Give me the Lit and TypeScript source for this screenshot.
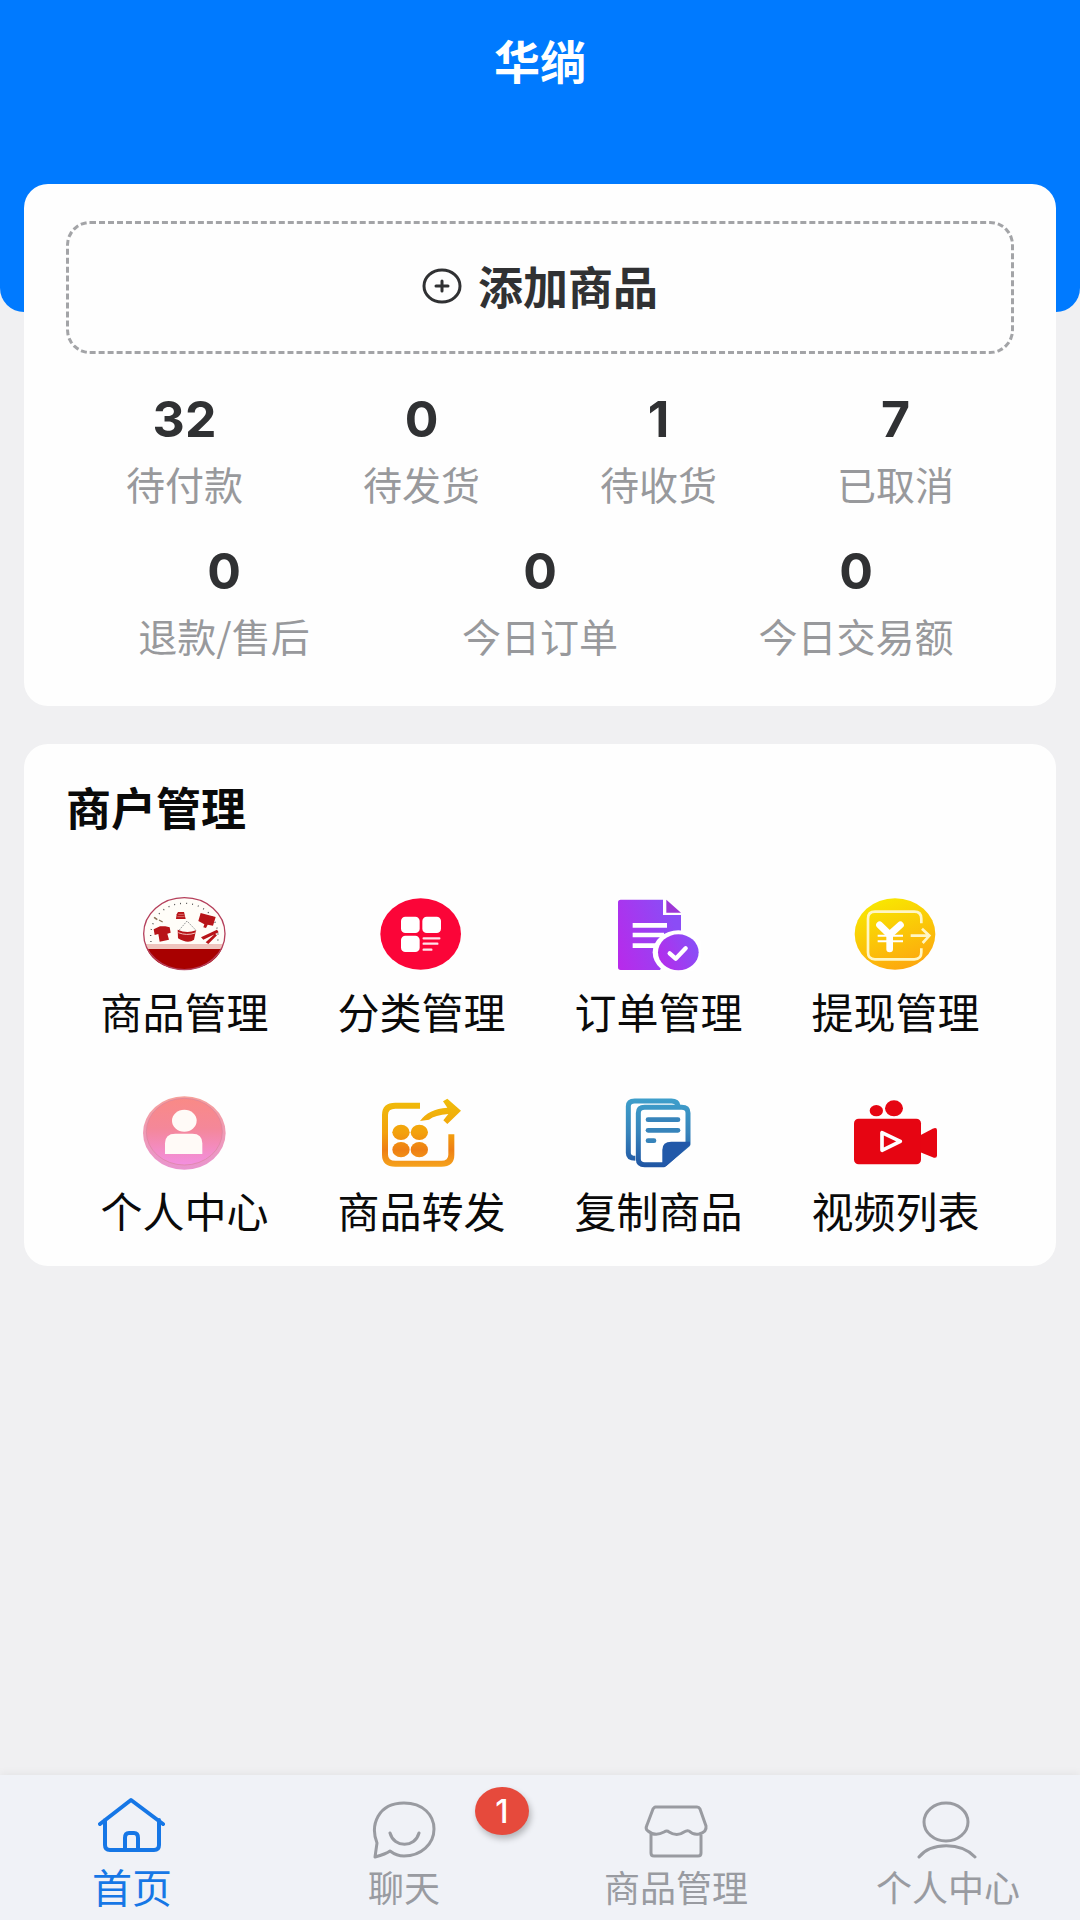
import { LitElement, html, css, svg, TemplateResult } from "lit";
import { customElement, property } from "lit/decorators.js";
import { classMap } from "lit/directives/class-map.js";

interface Stat {
  value: number;
  label: string;
}

interface Tile {
  label: string;
  icon: TemplateResult;
}

interface Tab {
  label: string;
  icon: TemplateResult;
  active?: boolean;
  badge?: number;
}

const orderStats: Stat[] = [
  { value: 32, label: "待付款" },
  { value: 0, label: "待发货" },
  { value: 1, label: "待收货" },
  { value: 7, label: "已取消" },
];

const dayStats: Stat[] = [
  { value: 0, label: "退款/售后" },
  { value: 0, label: "今日订单" },
  { value: 0, label: "今日交易额" },
];

const goodsIcon = html`<svg viewBox="69 51 252 222" aria-hidden="true">
  <ellipse cx="193" cy="161" rx="122" ry="108" fill="#fffdf8" />
  <path d="M78 192H308L303 208H83Z" fill="#efc4bd" />
  <path d="M81 207H305C291 243 247 269 193 269S95 243 81 207Z" fill="#a80000" />
  <ellipse cx="193" cy="161" rx="122" ry="108" fill="none" stroke="#b5405c" stroke-width="4" />
  <path d="M93 186C84 120 130 70 193 70S302 120 293 186" fill="none" stroke="#555" stroke-width="4" stroke-dasharray="3 15" />
  <path d="M101 148L120 139H136L149 142L152 158L142 161L147 179L119 185L115 162L104 165Z" fill="#b81418" />
  <path d="M168 117L170 103L174 96H192L197 117Z" fill="#b81418" />
  <path d="M175 103H191M172 110H194" stroke="#e79a94" stroke-width="2" />
  <path d="M242 99L287 111L279 137L263 134L258 144L250 142L253 133L235 123Z" fill="#b81418" />
  <path d="M177 151L201 123L228 151" fill="none" stroke="#999" stroke-width="3" stroke-dasharray="5 3" />
  <path d="M173 149Q200 162 228 151L222 179Q204 193 174 175Z" fill="#b81418" />
  <path d="M175 158Q200 168 226 159" fill="none" stroke="#f3c2bd" stroke-width="3" />
  <path d="M243 172L291 149L296 157L250 179ZM257 187L285 161L291 166L265 192Z" fill="#b81418" />
  <path d="M102 112L112 119M117 120L128 126" stroke="#8b7355" stroke-width="4" />
</svg>`;

const categoryIcon = html`<svg viewBox="60 51 252 222" aria-hidden="true">
  <ellipse cx="182" cy="162" rx="121" ry="107" fill="#fb0538" />
  <g fill="#fff">
    <rect x="123" y="110" width="56" height="49" rx="13" />
    <rect x="187" y="110" width="56" height="49" rx="13" />
    <rect x="123" y="167" width="56" height="49" rx="13" />
  </g>
  <path d="M191 175H238M191 191H232M191 209H214" stroke="#ffe3ea" stroke-width="7" stroke-linecap="round" />
</svg>`;

const orderIcon = html`<svg viewBox="81 51 252 222" aria-hidden="true">
  <defs>
    <linearGradient id="order" x1="0" y1="1" x2="1" y2="0.6">
      <stop offset="0" stop-color="#b929ea" />
      <stop offset="1" stop-color="#8b4cf6" />
    </linearGradient>
  </defs>
  <path d="M92 59H219V105H273V160L210 270H92Q84 270 84 262V67Q84 59 92 59Z" fill="url(#order)" />
  <path d="M229 59L273 98H229Z" fill="#9d36d6" />
  <path d="M128 136H231M128 165H222M128 197H200" stroke="#fff" stroke-width="14" />
  <ellipse cx="265" cy="217" rx="77" ry="66" fill="#fff" />
  <ellipse cx="265" cy="217" rx="61" ry="54" fill="url(#order)" />
  <path d="M239 220L257 236L287 205" fill="none" stroke="#fff" stroke-width="13" stroke-linecap="round" stroke-linejoin="round" />
</svg>`;

const withdrawIcon = html`<svg viewBox="102 51 252 222" aria-hidden="true">
  <defs>
    <linearGradient id="coin" x1="0.2" y1="0" x2="0.6" y2="1">
      <stop offset="0" stop-color="#f8ea00" />
      <stop offset="1" stop-color="#fda80e" />
    </linearGradient>
  </defs>
  <ellipse cx="225" cy="162" rx="121" ry="107" fill="url(#coin)" />
  <path d="M304 130V116Q304 95 283 95H165Q144 95 144 116V217Q144 238 165 238H283Q304 238 304 217V205" fill="none" stroke="#fff6c4" stroke-width="8" />
  <path d="M272 167H324M306 146L328 167L308 189" fill="none" stroke="#fff6c4" stroke-width="8" />
  <path d="M179 135L209 164L241 135" fill="none" stroke="#fff" stroke-width="21" stroke-linecap="round" />
  <path d="M209 160V207" stroke="#fff" stroke-width="20" stroke-linecap="round" />
  <path d="M173 167H249M173 184H249" stroke="#fff" stroke-width="6" />
</svg>`;

const profileIcon = html`<svg viewBox="69 51 252 222" aria-hidden="true">
  <defs>
    <linearGradient id="profile" x1="0" y1="0" x2="0" y2="1">
      <stop offset="0" stop-color="#f98a86" />
      <stop offset="0.45" stop-color="#f48799" />
      <stop offset="1" stop-color="#f38fe0" />
    </linearGradient>
    <linearGradient id="profile-rim" x1="0" y1="0" x2="0" y2="1">
      <stop offset="0" stop-color="#f6a09a" />
      <stop offset="1" stop-color="#e994cf" />
    </linearGradient>
  </defs>
  <ellipse cx="193" cy="162" rx="124" ry="110" fill="url(#profile-rim)" />
  <ellipse cx="193" cy="158" rx="114" ry="100" fill="url(#profile)" stroke="#d9849d" stroke-width="2" />
  <ellipse cx="193" cy="125" rx="37" ry="33" fill="#fffaf7" />
  <path d="M135 225V193Q135 164 166 164H217Q247 164 247 193V225Z" fill="#fffaf7" />
</svg>`;

const forwardIcon = html`<svg viewBox="60 51 252 222" aria-hidden="true">
  <defs>
    <linearGradient id="forward" gradientUnits="userSpaceOnUse" x1="0" y1="60" x2="0" y2="262">
      <stop offset="0" stop-color="#efbd0a" />
      <stop offset="0.5" stop-color="#f3a10c" />
      <stop offset="0.75" stop-color="#ee7f14" />
      <stop offset="1" stop-color="#f5a21c" />
    </linearGradient>
  </defs>
  <path d="M180 80H106Q75 80 75 108V227Q75 254 106 254H244Q274 254 274 227V166" fill="none" stroke="url(#forward)" stroke-width="18" />
  <g fill="url(#forward)">
    <ellipse cx="123" cy="160" rx="26" ry="23" />
    <ellipse cx="178" cy="160" rx="26" ry="23" />
    <ellipse cx="123" cy="212" rx="26" ry="23" />
    <ellipse cx="178" cy="212" rx="26" ry="23" />
    <path d="M180 126Q205 90 262 86L249 67L262 59L303 95L262 135L250 124L265 105Q225 108 207 122Z" />
  </g>
</svg>`;

const copyIcon = html`<svg viewBox="81 51 252 222" aria-hidden="true">
  <defs>
    <linearGradient id="copy" gradientUnits="userSpaceOnUse" x1="0" y1="58" x2="0" y2="264">
      <stop offset="0" stop-color="#3e9fcb" />
      <stop offset="0.5" stop-color="#3784bb" />
      <stop offset="1" stop-color="#1f55a3" />
    </linearGradient>
  </defs>
  <path d="M264 80Q262 66 244 66H134Q115 66 115 82V222Q115 238 136 238" fill="none" stroke="url(#copy)" stroke-width="15" />
  <path d="M222 257H164Q145 257 145 240V102Q145 85 164 85H275Q294 85 294 102V196Z" fill="#fff" stroke="url(#copy)" stroke-width="15" stroke-linejoin="round" />
  <path d="M217 262V212Q217 188 244 188H300V197L228 262Z" fill="#2259a9" />
  <g fill="#3784bb">
    <rect x="167" y="115" width="104" height="14" rx="7" />
    <rect x="167" y="147" width="104" height="14" rx="7" />
    <rect x="167" y="178" width="32" height="14" rx="7" />
  </g>
</svg>`;

const videoIcon = html`<svg viewBox="99 51 252 222" aria-hidden="true">
  <g fill="#e60512">
    <ellipse cx="166" cy="95" rx="20" ry="17" />
    <ellipse cx="219" cy="88" rx="27" ry="24" />
    <rect x="99" y="119" width="201" height="137" rx="14" />
    <path d="M298 169L335 149Q348 143 348 154V229Q348 240 335 235L298 220Z" />
  </g>
  <path d="M183 161V214L238 187Z" fill="none" stroke="#fff" stroke-width="11" stroke-linejoin="round" />
</svg>`;

const tiles: Tile[] = [
  { label: "商品管理", icon: goodsIcon },
  { label: "分类管理", icon: categoryIcon },
  { label: "订单管理", icon: orderIcon },
  { label: "提现管理", icon: withdrawIcon },
  { label: "个人中心", icon: profileIcon },
  { label: "商品转发", icon: forwardIcon },
  { label: "复制商品", icon: copyIcon },
  { label: "视频列表", icon: videoIcon },
];

const tabs: Tab[] = [
  {
    label: "首页",
    active: true,
    icon: svg`<path d="M2 27L33 3L65 27M7 23V48Q7 53 12 53H56Q61 53 61 48V23M27 53V41Q27 36 31 36H36Q40 36 40 41V53" stroke-width="4" />`,
  },
  {
    label: "聊天",
    badge: 1,
    icon: svg`<path d="M5 60L7 46C0 28 8 6 34 6C53 6 64 18 64 32C64 47 51 59 34 59C28 59 24 57 20 54Q16 57 5 60ZM20 36C24 51 45 51 49 36" />`,
  },
  {
    label: "商品管理",
    icon: svg`<path d="M13 10H55Q57 10 58 12L64 29Q65 35 57 37Q51 38 47 34Q45 33 42 35Q35 40 27 35Q25 33 22 35Q13 40 6 34Q3 32 5 28L11 12Q12 10 14 10ZM9 37V56Q9 59 12 59H56Q59 59 59 56V37" />`,
  },
  {
    label: "个人中心",
    icon: svg`<ellipse cx="32" cy="25" rx="22" ry="19" /><path d="M5 60C17 45 47 45 61 60" />`,
  },
];

@customElement("stat-row")
export class StatRow extends LitElement {
  @property({ attribute: false }) stats: Stat[] = [];

  static styles = css`
    :host {
      display: block;
    }
    .row {
      display: grid;
      grid-auto-flow: column;
      grid-auto-columns: minmax(0, 1fr);
    }
    .stat {
      display: flex;
      flex-direction: column;
      align-items: center;
      gap: 4px;
      color: #98999c;
      text-decoration: none;
      white-space: nowrap;
    }
    .value {
      font-family: Inter, "Noto Sans CJK SC", sans-serif;
      font-size: 50px;
      font-weight: 700;
      line-height: 64px;
      color: #303133;
    }
    .label {
      font-size: 39px;
      line-height: 56px;
    }
  `;

  render() {
    return html`<div class="row">
      ${this.stats.map(
        (s) => html`<a class="stat" href="#">
          <span class="value">${s.value}</span>
          <span class="label">${s.label}</span>
        </a>`
      )}
    </div>`;
  }
}

@customElement("tab-bar")
export class TabBar extends LitElement {
  @property({ attribute: false }) tabs: Tab[] = [];

  static styles = css`
    :host {
      display: block;
      position: sticky;
      bottom: 0;
      overflow-x: clip;
      background: #f0f2f7;
      box-shadow: 0 -2px 8px rgba(0, 0, 0, 0.05);
    }
    .tabs {
      display: grid;
      grid-template-columns: repeat(4, minmax(0, 1fr));
      margin: 0 -4px;
      padding: 22px 0 7px;
    }
    .tab {
      position: relative;
      display: flex;
      flex-direction: column;
      align-items: center;
      color: #999ba1;
      text-decoration: none;
      white-space: nowrap;
      font-size: 36px;
      line-height: 54px;
    }
    .active {
      color: #1677e6;
      font-size: 40px;
    }
    .icon {
      display: block;
      width: 68px;
      height: 62px;
      fill: none;
      stroke: currentColor;
      stroke-width: 3;
      stroke-linecap: round;
      stroke-linejoin: round;
    }
    .badge {
      position: absolute;
      top: -10px;
      left: calc(50% + 71px);
      width: 54px;
      height: 48px;
      border-radius: 50%;
      background: #e64a3c;
      box-shadow: 2px 4px 6px rgba(0, 0, 0, 0.25);
      color: #fff;
      font-family: Inter, sans-serif;
      font-size: 32px;
      font-weight: 500;
      line-height: 50px;
      text-align: center;
    }
  `;

  render() {
    return html`<nav class="tabs">
      ${this.tabs.map(
        (t) => html`<a class=${classMap({ tab: true, active: !!t.active })} href="#">
          <svg class="icon" viewBox="0 0 68 62" aria-hidden="true">${t.icon}</svg>
          <span>${t.label}</span>
          ${t.badge ? html`<span class="badge">${t.badge}</span>` : null}
        </a>`
      )}
    </nav>`;
  }
}

@customElement("app-root")
export class AppRoot extends LitElement {
  static styles = css`
    :host {
      display: flex;
      flex-direction: column;
      min-height: 100vh;
      background: #f0f0f2;
      font-family: "Noto Sans CJK SC", sans-serif;
    }
    .header {
      height: 312px;
      box-sizing: border-box;
      padding-top: 27px;
      border-radius: 0 0 24px 24px;
      background: #007aff;
    }
    .title {
      margin: 0;
      color: #fff;
      font-size: 46px;
      font-weight: 700;
      line-height: 64px;
      text-align: center;
    }
    .main {
      flex: 1;
      display: flex;
      flex-direction: column;
      gap: 38px;
      margin-top: -128px;
      padding: 0 24px 24px;
    }
    .card {
      padding: 37px 42px 43px;
      border-radius: 24px;
      background: #fefefe;
    }
    .add {
      display: flex;
      align-items: center;
      justify-content: center;
      gap: 16px;
      box-sizing: border-box;
      width: 100%;
      height: 133px;
      margin: 0;
      padding: 0 0 4px;
      border: 3px dashed #a3a4a7;
      border-radius: 24px;
      background: none;
      color: #303133;
      font-family: inherit;
      font-size: 45px;
      font-weight: 700;
      line-height: 64px;
    }
    .plus {
      width: 40px;
      height: 36px;
      fill: none;
      stroke: currentColor;
      stroke-width: 3;
      stroke-linecap: round;
    }
    .stats {
      display: flex;
      flex-direction: column;
      gap: 28px;
      padding-top: 33px;
    }
    .heading {
      margin: 0;
      color: #0a0a0a;
      font-size: 45px;
      font-weight: 700;
      line-height: 64px;
    }
    .menu {
      padding: 31px 42px 26px;
    }
    .tiles {
      display: grid;
      grid-template-columns: repeat(4, minmax(0, 1fr));
      row-gap: 55px;
      padding-top: 58px;
    }
    .tile {
      display: flex;
      flex-direction: column;
      align-items: center;
      gap: 10px;
      color: #0a0a0a;
      text-decoration: none;
      white-space: nowrap;
      font-size: 42px;
      line-height: 60px;
    }
    .tile svg {
      display: block;
      width: 84px;
      height: 74px;
    }
  `;

  render() {
    return html`
      <header class="header"><h1 class="title">华绱</h1></header>
      <main class="main">
        <section class="card">
          <button class="add" type="button">
            <svg class="plus" viewBox="0 0 40 36" aria-hidden="true">
              <ellipse cx="20" cy="18" rx="18" ry="16" />
              <path d="M20 13V23M14 18H26" />
            </svg>
            <span>添加商品</span>
          </button>
          <div class="stats">
            <stat-row .stats=${orderStats}></stat-row>
            <stat-row .stats=${dayStats}></stat-row>
          </div>
        </section>
        <section class="card menu">
          <h2 class="heading">商户管理</h2>
          <div class="tiles">
            ${tiles.map((t) => html`<a class="tile" href="#">${t.icon}<span>${t.label}</span></a>`)}
          </div>
        </section>
      </main>
      <tab-bar .tabs=${tabs}></tab-bar>
    `;
  }
}
